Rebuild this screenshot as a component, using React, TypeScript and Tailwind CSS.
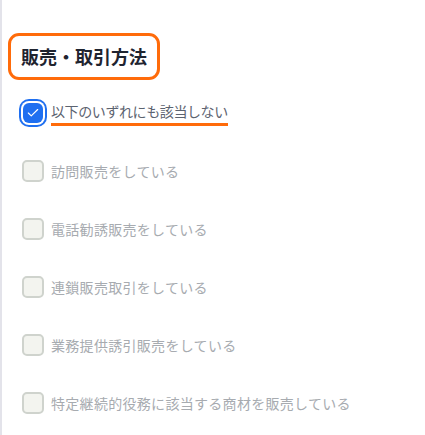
import { Check } from 'lucide-react';

const items = [
  '訪問販売をしている',
  '電話勧誘販売をしている',
  '連鎖販売取引をしている',
  '業務提供誘引販売をしている',
  '特定継続的役務に該当する商材を販売している',
];

const App = () => {
  return (
    <div
      className="min-h-[435px] w-[425px] bg-white border-l-2 border-[#e3e3ea] pt-[33px] pl-[6px]"
      style={{ fontFamily: '"Noto Sans CJK JP", "Noto Sans", sans-serif' }}
    >
      {/* Section title */}
      <div className="inline-flex h-[47px] items-center rounded-[11px] border-[3px] border-[#ff6b0a] px-[10px]">
        <h2 className="text-[18px] font-bold text-[#1f2430]">販売・取引方法</h2>
      </div>

      <div className="mt-[4px] flex flex-col">
        {/* Checked option */}
        <div className="flex h-[58px] items-center pl-[15px]">
          <div className="flex h-[20px] w-[20px] items-center justify-center rounded-[6px] bg-[#1f6ff0] ring-2 ring-[#1f6ff0] ring-offset-2">
            <Check className="h-[14px] w-[14px] text-white" strokeWidth={2} />
          </div>
          <span className="ml-[8px] border-b-[3px] border-[#ff6b0a] pb-[1px] text-[14px] leading-[22px] tracking-[-0.4px] text-[#5c6370]">
            以下のいずれにも該当しない
          </span>
        </div>

        {/* Disabled options */}
        {items.map((label) => (
          <div key={label} className="flex h-[58px] items-center pl-[14px]">
            <div className="h-[22px] w-[22px] rounded-[5px] border-2 border-[#cfd3cd] bg-[#f3f4ef]" />
            <span className="ml-[7px] text-[14px] tracking-[0.3px] text-[#a7abb0]">{label}</span>
          </div>
        ))}
      </div>
    </div>
  );
};

export default App;
